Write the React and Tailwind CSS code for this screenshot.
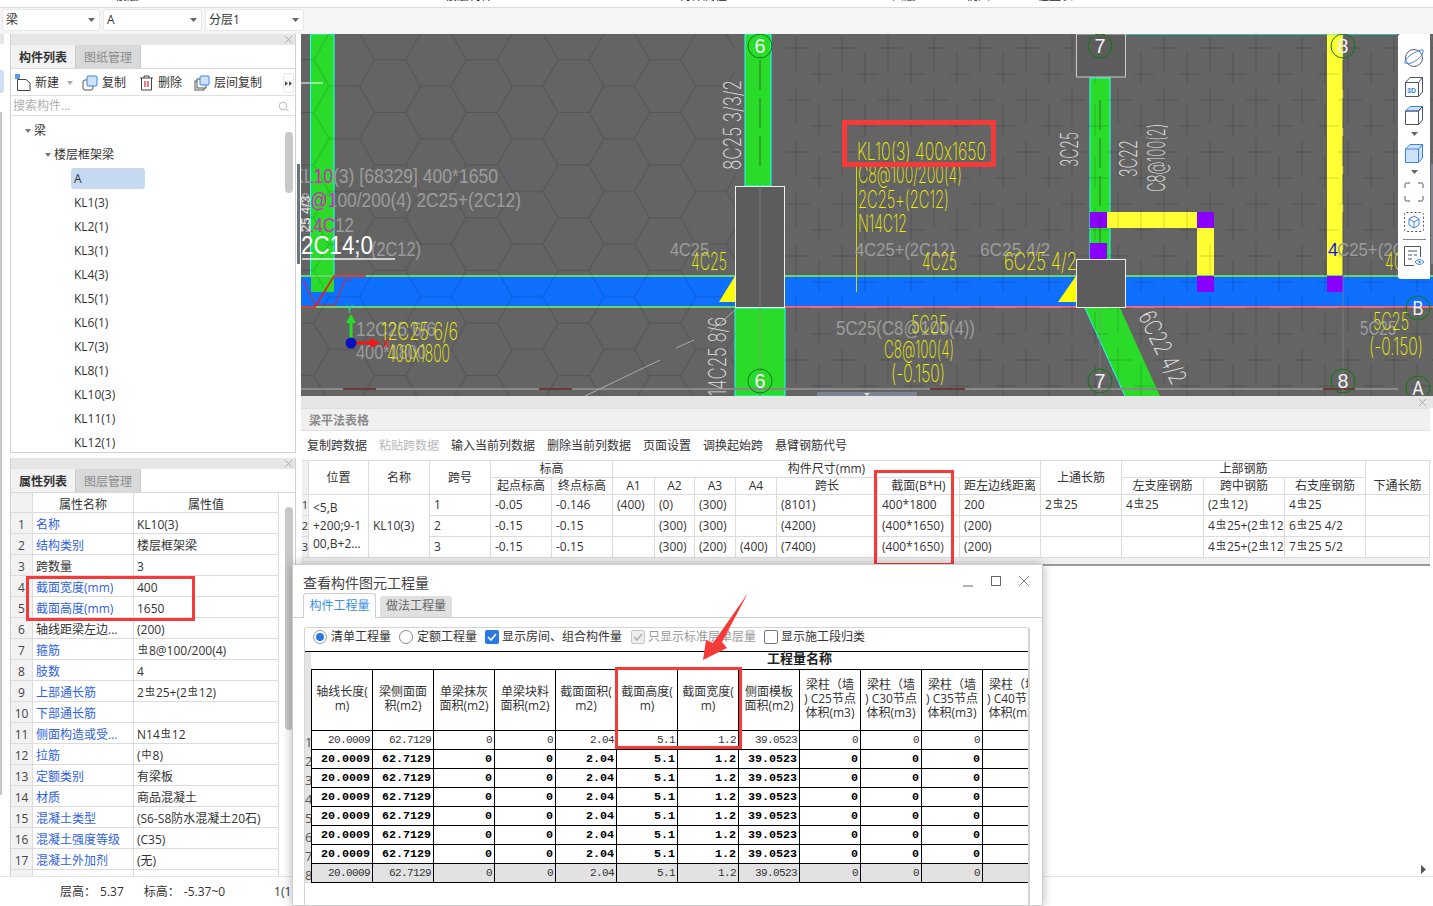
import React from 'react';

const FONT = "font-['Open_Sans','Noto_Sans_CJK_SC',sans-serif]";

// rebar grade glyphs sit a little above the baseline
const rebar = (text) =>
  text.split(/(虫|中)/).map((part, i) =>
    part === '虫' || part === '中' ? (
      <span key={i} className="relative -top-[2px] mx-[1px] text-[10px]">{part}</span>
    ) : (
      <span key={i}>{part}</span>
    )
  );

const CloseX = ({ className }) => (
  <svg width="9" height="9" viewBox="0 0 9 9" className={className}>
    <path d="M1 1L8 8M8 1L1 8" stroke="#aaa" strokeWidth="1" />
  </svg>
);

const Caret = () => (
  <svg width="7" height="4" viewBox="0 0 7 4" className="block"><path d="M0 0H7L3.5 4Z" fill="#666" /></svg>
);

const Select = ({ label, w }) => (
  <div className={`flex h-[22px] items-center justify-between rounded-[3px] border border-[#e8e8e8] bg-white pl-[3px] pr-[4px] text-[12px] text-[#333] ${w}`}>
    <span>{label}</span>
    <Caret />
  </div>
);

const PanelTabs = ({ active, other }) => (
  <div className="flex h-[24px] border-b border-[#d8d8d8] bg-white text-[12px] leading-[25px]">
    <div className="w-[65px] border-r border-[#ccc] bg-[#f2f2f2] text-center font-bold text-[#333]">{active}</div>
    <div className="w-[65px] border-r border-[#ccc] bg-[#d9d9d9] text-center text-[#8c8c8c]">{other}</div>
  </div>
);

const tree = ['KL1(3)', 'KL2(1)', 'KL3(1)', 'KL4(3)', 'KL5(1)', 'KL6(1)', 'KL7(3)', 'KL8(1)', 'KL10(3)', 'KL11(1)', 'KL12(1)'];

const ComponentPanel = () => (
  <div className="flex h-[419px] flex-col border border-[#d0d0d0] border-t-0">
    <div className="flex h-[11px] items-center justify-end bg-[#e6e6e6] pr-[2px]"><CloseX /></div>
    <PanelTabs active="构件列表" other="图纸管理" />
    <div className="flex h-[27px] items-center border-b border-[#e0e0e0] bg-white pl-[4px] pt-[2px] text-[12px] text-[#333]">
      <svg width="17" height="18" viewBox="0 0 17 18">
        <path d="M2.5 5.5H11L15 9V16.5H2.5Z" fill="none" stroke="#444" />
        <rect x="0" y="0" width="5" height="5" fill="#5b9bec" />
      </svg>
      <span className="ml-[3px]">新建</span>
      <span className="ml-[8px] mr-[9px]"><svg width="6" height="4" viewBox="0 0 6 4" className="block"><path d="M0 0H6L3 4Z" fill="#aaa" /></svg></span>
      <svg width="16" height="16" viewBox="0 0 16 16">
        <rect x="1" y="5" width="10" height="10" rx="2" fill="#fff" stroke="#555" />
        <rect x="5" y="1" width="10" height="10" rx="1" fill="#cfe2fb" stroke="#3b82e6" />
      </svg>
      <span className="ml-[4px]">复制</span>
      <svg width="15" height="16" viewBox="0 0 15 16" className="ml-[13px]">
        <path d="M1 3H14M5 3V1H10V3M2.5 3V15H12.5V3" fill="none" stroke="#444" />
        <path d="M6 6V12M9 6V12" stroke="#d22" strokeWidth="1.2" />
      </svg>
      <span className="ml-[4px]">删除</span>
      <svg width="16" height="16" viewBox="0 0 16 16" className="ml-[12px]">
        <rect x="1" y="6" width="9" height="9" fill="#fff" stroke="#555" />
        <rect x="3" y="4" width="9" height="9" fill="#fff" stroke="#555" />
        <rect x="6" y="1" width="9" height="9" rx="1" fill="#cfe2fb" stroke="#3b82e6" />
      </svg>
      <span className="ml-[4px]">层间复制</span>
      <div className="ml-[21px] flex h-[20px] w-[11px] items-center justify-center rounded-[3px] border border-[#e8e8e8]">
        <svg width="7" height="5" viewBox="0 0 7 5"><path d="M0 0L3 2.5L0 5ZM4 0L7 2.5L4 5Z" fill="#555" /></svg>
      </div>
    </div>
    <div className="flex h-[20px] items-center justify-between border-b border-[#e0e0e0] bg-white pl-[2px] pr-[6px] pt-[1px] text-[12px] text-[#b0b0b0]">
      <span>搜索构件...</span>
      <svg width="11" height="11" viewBox="0 0 11 11"><circle cx="5" cy="5" r="3.8" fill="none" stroke="#bbb" /><path d="M8 8L10.5 10.5" stroke="#bbb" /></svg>
    </div>
    <div className="relative min-h-0 flex-1 overflow-hidden bg-white pt-[2px] text-[12px] leading-[26px] text-[#333]">
      <div className="flex h-[24px] items-center pl-[14px] pt-[1px]">
        <svg width="6" height="4" viewBox="0 0 6 4" className="mr-[3px]"><path d="M0 0H6L3 4Z" fill="#777" /></svg>梁
      </div>
      <div className="flex h-[24px] items-center pl-[34px] pt-[1px]">
        <svg width="6" height="4" viewBox="0 0 6 4" className="mr-[3px]"><path d="M0 0H6L3 4Z" fill="#777" /></svg>楼层框架梁
      </div>
      <div className="flex h-[24px] items-center pl-[60px]">
        <div className="h-[21px] w-[74px] rounded-[3px] bg-[#c5d9f1] pl-[3px] leading-[21px]">A</div>
      </div>
      {tree.map((name) => (
        <div key={name} className="h-[24px] pl-[63px]">{name}</div>
      ))}
      <div className="absolute right-[2px] top-[16px] h-[61px] w-[8px] rounded-[4px] bg-[#c8c8c8]" />
    </div>
  </div>
);

const props = [
  ['名称', 'KL10(3)', 1], ['结构类别', '楼层框架梁', 1], ['跨数量', '3', 0], ['截面宽度(mm)', '400', 1],
  ['截面高度(mm)', '1650', 1], ['轴线距梁左边...', '(200)', 0], ['箍筋', '虫8@100/200(4)', 1], ['肢数', '4', 1],
  ['上部通长筋', '2虫25+(2虫12)', 1], ['下部通长筋', '', 1], ['侧面构造或受...', 'N14虫12', 1], ['拉筋', '(中8)', 1],
  ['定额类别', '有梁板', 1], ['材质', '商品混凝土', 1], ['混凝土类型', '(S6-S8防水混凝土20石)', 1],
  ['混凝土强度等级', '(C35)', 1], ['混凝土外加剂', '(无)', 1], ['', '', 0],
];

const PropertyPanel = () => (
  <div className="relative flex h-[418px] flex-col border-x border-[#d0d0d0]">
    <div className="flex h-[11px] items-center justify-end bg-[#e6e6e6] pr-[2px]"><CloseX /></div>
    <PanelTabs active="属性列表" other="图层管理" />
    <div className="min-h-0 flex-1 overflow-hidden bg-white text-[12px] text-[#333]">
      <div className="flex h-[20px] w-[268px] border-b border-r border-[#dcdcdc] leading-[23px]">
        <div className="w-[22px] border-r border-[#dcdcdc] bg-[#f2f2f2]" />
        <div className="w-[101px] border-r border-[#dcdcdc] text-center">属性名称</div>
        <div className="flex-1 text-center">属性值</div>
      </div>
      {props.map(([name, value, link], i) => (
        <div key={i} className="flex h-[21px] w-[268px] border-b border-r border-[#dcdcdc] leading-[23px]">
          <div className="w-[22px] border-r border-[#dcdcdc] bg-[#f2f2f2] text-center text-[#444]">{i < 17 ? i + 1 : ''}</div>
          <div className={`w-[101px] truncate border-r border-[#dcdcdc] pl-[3px] ${link ? 'text-[#2f62e0]' : 'text-[#333]'}`}>{name}</div>
          <div className="flex-1 truncate pl-[3px]">{rebar(value)}</div>
        </div>
      ))}
    </div>
    <div className="absolute right-[2px] top-[49px] h-[223px] w-[8px] rounded-[4px] bg-[#c8c8c8]" />
  </div>
);

const yellowTexts = [
  ['KL10(3)  400x1650', 857, 160, 129], ['C8@100/200(4)', 858, 183, 104], ['2C25+(2C12)', 858, 208, 91], ['N14C12', 858, 232, 49],
  ['4C25', 691, 270, 36], ['4C25', 922, 270, 35], ['6C25  4/2', 1004, 270, 73], ['12C25  6/6', 381, 340, 77], ['400x1800', 387, 362, 63],
  ['5C25', 911, 333, 36], ['C8@100(4)', 884, 358, 70], ['(-0.150)', 891, 382, 54], ['5C25', 1373, 330, 36], ['(-0.150)', 1369, 355, 54], ['4C25', 1385, 270, 36],
];

const grayTexts = [
  ['(2C12)', 371, 256, 50, 20],
  ['4C25', 670, 256, 39, 18], ['4C25+(2C12)', 855, 256, 100, 18], ['6C25 4/2', 980, 256, 70, 18], ['C25+(2C12)', 1337, 256, 92, 18],
  ['5C25(C8@100(4))', 836, 335, 139, 20], ['5C25', 1360, 335, 36, 20], ['12C25 6/6', 356, 336, 80, 20], ['400*1800', 356, 359, 70, 20],
];

// these lines cross the first green beam, where they read magenta
const crossingTexts = [
  ['KL10(3) [68329] 400*1650', 292, 183, 206], ['C8@100/200(4) 2C25+(2C12)', 288, 207, 233], ['N14C12', 292, 232, 62],
];

const sideTexts = [
  ['8C25  3/3/2', 741, 170, 90, '#e0e0e0'], ['14C25  8/6', 726, 396, 79, '#e0e0e0'], ['3C25', 1078, 167, 35, '#e6e6e6'],
  ['3C22', 1137, 177, 37, '#e6e6e6'], ['C8@100(2)', 1165, 192, 68, '#e6e6e6'],
];

const axisMarks = [['6', 760, 46], ['7', 1100, 46], ['8', 1343, 46], ['6', 760, 381], ['7', 1100, 381], ['8', 1343, 381], ['B', 1418, 308], ['A', 1418, 388]];

const CadCanvas = () => (
  <svg width="1132" height="362" viewBox="301 34 1132 362" className="block font-['Liberation_Sans',sans-serif]">
    <defs>
      <pattern id="hex" width="91.7" height="52.65" patternUnits="userSpaceOnUse" patternTransform="translate(405.5 296.7)">
        <path d="M0 26.3L15.2 0H45.6L60.8 26.3L45.6 52.65H15.2ZM60.8 26.3H91.7" fill="none" stroke="#000" strokeOpacity="0.16" />
      </pattern>
      <pattern id="rebars" width="46" height="52" patternUnits="userSpaceOnUse" patternTransform="translate(786 34)">
        <path d="M10 2V38M33 18V50M0 14H24M26 40H46" fill="none" stroke="#000" strokeOpacity="0.16" />
      </pattern>
      <clipPath id="beam"><rect x="311" y="34" width="23" height="258" /></clipPath>
      <clipPath id="offBeam"><path d="M301 34H311V296H301ZM334 34H735V296H334Z" /></clipPath>
    </defs>
    <rect x="301" y="34" width="1132" height="362" fill="#646464" />

    {/* beams */}
    <rect x="310.5" y="34" width="23.5" height="258" fill="#2adb2a" stroke="#2ff" />
    <rect x="745" y="34" width="26" height="152" fill="#2adb2a" stroke="#2ff" />
    <rect x="735" y="308" width="50" height="88" fill="#2adb2a" stroke="#2ff" />
    <rect x="1090" y="78" width="20" height="182" fill="#2adb2a" stroke="#2ff" />
    <rect x="1327" y="34" width="16" height="242" fill="#ffff33" />
    <path d="M1085 308H1120L1160 396H1125Z" fill="#2adb2a" />
    <path d="M1085 308L1125 396" stroke="#2ff" />
    <rect x="1107" y="212" width="90" height="16" fill="#ffff33" />
    <rect x="1197" y="228" width="17" height="48" fill="#ffff33" />
    <rect x="301" y="276" width="1132" height="31" fill="#0f6fff" />
    <rect x="311" y="276" width="23" height="16" fill="#2adb2a" />
    <path d="M301 276H1433" stroke="#6ad66a" strokeWidth="2" />
    <path d="M301 307H735" stroke="#6ad66a" strokeWidth="2" />
    <path d="M735 307H1433" stroke="#f56a7a" strokeWidth="2" />
    <path d="M1125 34H1397" stroke="#2ff" strokeWidth="1" />

    {/* patterns */}
    <rect x="301" y="34" width="434" height="362" fill="url(#hex)" />
    <rect x="785" y="34" width="648" height="362" fill="url(#rebars)" />

    {/* purple and triangles */}
    <rect x="1090" y="212" width="17" height="16" fill="#8a00ff" />
    <rect x="1090" y="243" width="17" height="17" fill="#8a00ff" />
    <rect x="1197" y="212" width="17" height="16" fill="#8a00ff" />
    <rect x="1197" y="276" width="17" height="16" fill="#8a00ff" />
    <rect x="1327" y="276" width="16" height="16" fill="#8a00ff" />
    <path d="M719 302L735 276V302ZM1058 302L1076 276V302Z" fill="#ffff00" />

    {/* columns */}
    <rect x="735.5" y="186.5" width="49" height="121" fill="#5c5c5c" stroke="#eee" />
    <rect x="1076.5" y="34" width="49" height="43" fill="#5c5c5c" stroke="#ccc" />
    <rect x="1076.5" y="259.5" width="49" height="48" fill="#5c5c5c" stroke="#eee" />

    {/* dimension stripes */}
    <path d="M301 389H1398" stroke="#8a8a8a" strokeWidth="2" />
    <path d="M343 389H376M539 389H572M930 389H965M1323 389H1355" stroke="#6b3a34" strokeWidth="2" />
    <path d="M585 396L660 360M676 348L694 340M710 332L735 310" stroke="#aaa" />
    <path d="M760 186V396M1100 308V396M1343 34V396" stroke="#888" strokeOpacity="0.6" />
    <path d="M760 60V170M1100 100V250M1343 60V276" stroke="#333" strokeDasharray="30 8" strokeOpacity="0.6" />
    <path d="M856.5 166V292" stroke="#d6d600" />
    <path d="M301 83H323" stroke="#fff" />

    {/* red bent rebar */}
    <path d="M301 307H315L334 276H366" fill="none" stroke="#f01818" strokeWidth="1.6" />
    <path d="M303 280L315 305H335L345 280H351" fill="none" stroke="#e02020" />

    {grayTexts.map(([t, x, y, len, size], i) => (
      <text key={i} x={x} y={y} fontSize={size} fill="#9c9c9c" textLength={len} lengthAdjust="spacingAndGlyphs">{t}</text>
    ))}
    {crossingTexts.map(([t, x, y, len]) => (
      <g key={t}>
        <text x={x} y={y} fontSize="20" fill="#9c9c9c" textLength={len} lengthAdjust="spacingAndGlyphs" clipPath="url(#offBeam)">{t}</text>
        <text x={x} y={y} fontSize="20" fill="#d824c4" textLength={len} lengthAdjust="spacingAndGlyphs" clipPath="url(#beam)">{t}</text>
      </g>
    ))}
    <text transform="translate(310 232) rotate(-90)" fontSize="13" fill="#e8e8e8">25 4/3</text>
    <text x="301" y="254" fontSize="25" fill="#ffffff" textLength="72" lengthAdjust="spacingAndGlyphs">2C14;0</text>
    <path d="M302 259H395" stroke="#eee" strokeWidth="1.4" />
    <text x="1328" y="256" fontSize="18" fill="#1414e0">4</text>

    {/* CAD labels are a thin single-stroke font in the source */}
    <g className="font-['Inter','Liberation_Sans',sans-serif] [font-feature-settings:'calt'_0]" fontWeight="200">
      {yellowTexts.map(([t, x, y, len]) => (
        <text key={`${t}${x}`} x={x} y={y} fontSize="24" fill="#f0f000" textLength={len} lengthAdjust="spacingAndGlyphs">{t}</text>
      ))}
      {sideTexts.map(([t, x, y, len, color]) => (
        <text key={t} transform={`translate(${x} ${y}) rotate(-90)`} fontSize="24" fill={color} textLength={len} lengthAdjust="spacingAndGlyphs">{t}</text>
      ))}
      <text transform="translate(1138 316) rotate(64)" fontSize="24" fill="#e6e6e6" textLength="78" lengthAdjust="spacingAndGlyphs">6C22  4/2</text>
    </g>

    {/* axis bubbles */}
    {axisMarks.map(([t, x, y], i) => (
      <g key={i}>
        <circle cx={x} cy={y} r="12" fill="none" stroke="#0a7a0a" />
        <text x={x} y={y + 7} fontSize="20" fill="#f4f4f4" textAnchor="middle" textLength="11" lengthAdjust="spacingAndGlyphs">{t}</text>
      </g>
    ))}

    {/* coordinate gizmo */}
    <path d="M351 340V316" stroke="#22dd22" strokeWidth="3" />
    <path d="M351 314L346 323H356Z" fill="#22dd22" />
    <path d="M355 343H372" stroke="#f01818" strokeWidth="3" />
    <path d="M381 343L370 338V348Z" fill="#f01818" />
    <circle cx="351" cy="343" r="5.5" fill="#0a10c0" />
    <text x="346" y="313" fontSize="11" fill="#22dd88">Y</text>
    <text x="382" y="348" fontSize="12" fill="#f01818">X</text>

    {/* bottom scroll thumb */}
    <rect x="817" y="392" width="100" height="4" fill="#7b8494" />
    <path d="M864 393H870L867 396Z" fill="#ddd" />
    <rect x="1431" y="164" width="2" height="100" fill="#7a8290" />
  </svg>
);

const ViewTools = () => (
  <div className="absolute right-[3px] top-0 flex h-[245px] w-[32px] flex-col items-center rounded-l-[3px] bg-white pt-[12px]">
    <svg width="22" height="24" viewBox="0 0 22 24" fill="none" className="block shrink-0">
      <circle cx="11" cy="12" r="8.5" stroke="#555f73" />
      <path d="M2 17C0 14 12 4 20 4C22 8 10 20 2 17Z" stroke="#3b82e6" />
    </svg>
    <svg width="20" height="22" viewBox="0 0 20 22" fill="none" className="mt-[6px] block shrink-0">
      <path d="M1.5 6.5H14.5V20.5H1.5ZM1.5 6.5L6 1.5H18.5V16L14.5 20.5M14.5 6.5L18.5 1.5" stroke="#4a5568" />
      <text x="3" y="17" fontSize="7" fontWeight="700" fill="#3b82e6" className="font-['Liberation_Sans']">3D</text>
    </svg>
    <svg width="20" height="21" viewBox="0 0 20 21" fill="none" className="mt-[7px] block shrink-0">
      <path d="M1.5 6L6 1.5H18.5L14.5 6Z" fill="#cfe2fb" stroke="#3b82e6" />
      <path d="M1.5 6H14.5V19.5H1.5ZM14.5 6L18.5 1.5V15L14.5 19.5" stroke="#4a5568" />
    </svg>
    <div className="mt-[6px]"><Caret /></div>
    <svg width="20" height="21" viewBox="0 0 20 21" className="mt-[7px] block shrink-0">
      <path d="M1.5 6L6 1.5H18.5V15L14.5 19.5H1.5Z" fill="#cfe2fb" stroke="#3b82e6" />
      <path d="M1.5 6H14.5V19.5M14.5 6L18.5 1.5" fill="none" stroke="#3b82e6" />
    </svg>
    <div className="mt-[6px]"><Caret /></div>
    <svg width="20" height="20" viewBox="0 0 20 20" fill="none" className="mt-[8px] block shrink-0">
      <path d="M1 6V2.5Q1 1 2.5 1H6M14 1H17.5Q19 1 19 2.5V6M19 14V17.5Q19 19 17.5 19H14M6 19H2.5Q1 19 1 17.5V14" stroke="#4a5568" />
    </svg>
    <svg width="20" height="20" viewBox="0 0 20 20" fill="none" className="mt-[10px] block shrink-0">
      <rect x="0.5" y="0.5" width="19" height="19" rx="2" stroke="#4a5568" strokeDasharray="2 2" />
      <path d="M10 4L15 7V13L10 16L5 13V7ZM5 7L10 10L15 7M10 10V16" stroke="#3b82e6" />
    </svg>
    <div className="mt-[7px] h-px w-[23px] shrink-0 bg-[#888]" />
    <svg width="22" height="22" viewBox="0 0 22 22" fill="none" className="mt-[5px] block shrink-0">
      <path d="M17.5 12V1.5H1.5V20.5H11" stroke="#4a5568" />
      <path d="M5 6H14M5 10H9M11 10H14M5 14H9" stroke="#4a5568" />
      <path d="M12 17Q16 12 21 17Q16 22 12 17Z" stroke="#3b82e6" />
      <circle cx="16.5" cy="17" r="1.2" fill="#3b82e6" />
    </svg>
  </div>
);

const planCols = 'grid-cols-[7px_60px_61px_61px_61px_61px_42px_40px_41px_41px_101px_82px_81px_81px_82px_81px_81px_64px]';
const C = 'flex items-center justify-center border-b border-r border-[#dcdcdc]';
const V = 'flex items-center overflow-hidden whitespace-nowrap border-b border-r border-[#dcdcdc] pl-[4px]';

const planRows = [
  ['1', '-0.05', '-0.146', '(400)', '(0)', '(300)', '', '(8101)', '400*1800', '200', '2虫25', '4虫25', '(2虫12)', '4虫25', ''],
  ['2', '-0.15', '-0.15', '', '(300)', '(300)', '', '(4200)', '(400*1650)', '(200)', '', '', '4虫25+(2虫12)', '6虫25 4/2', ''],
  ['3', '-0.15', '-0.15', '', '(300)', '(200)', '(400)', '(7400)', '(400*1650)', '(200)', '', '', '4虫25+(2虫12)', '7虫25 5/2', ''],
];

const PlanTable = () => (
  <div className="flex h-[158px] flex-col">
    <div className="h-[23px] border-y border-[#e0e0e0] bg-[#f0f0f0] pl-[8px] text-[12px] font-bold leading-[24px] text-[#8a8a8a]">梁平法表格</div>
    <div className="flex h-[29px] items-center gap-[12px] bg-white pl-[6px] pt-[1px] text-[12px] text-[#333]">
      <span>复制跨数据</span>
      <span className="text-[#b8b8b8]">粘贴跨数据</span>
      <span>输入当前列数据</span>
      <span>删除当前列数据</span>
      <span>页面设置</span>
      <span>调换起始跨</span>
      <span>悬臂钢筋代号</span>
    </div>
    <div className={`ml-[1px] grid grid-rows-[17px_17px_21px_21px_21px] border-t border-[#dcdcdc] bg-white text-[12px] text-[#333] ${planCols}`}>
      <div className={`row-span-2 bg-[#f0f0f0] ${C}`} />
      <div className={`row-span-2 ${C}`}>位置</div>
      <div className={`row-span-2 ${C}`}>名称</div>
      <div className={`row-span-2 ${C}`}>跨号</div>
      <div className={`col-span-2 ${C}`}>标高</div>
      <div className={`col-span-7 ${C}`}>构件尺寸(mm)</div>
      <div className={`row-span-2 ${C}`}>上通长筋</div>
      <div className={`col-span-3 ${C}`}>上部钢筋</div>
      <div className="border-r border-[#dcdcdc]" />
      {['起点标高', '终点标高', 'A1', 'A2', 'A3', 'A4', '跨长', '截面(B*H)', '距左边线距离', '左支座钢筋', '跨中钢筋', '右支座钢筋', '下通长筋'].map((h) => (
        <div key={h} className={`${C} overflow-hidden whitespace-nowrap`}>{h}</div>
      ))}
      {planRows.map((row, r) => (
        <React.Fragment key={r}>
          <div className={`bg-[#f0f0f0] text-[11px] ${C}`}>{r + 1}</div>
          {r === 0 && (
            <>
              <div className="row-span-3 flex flex-col justify-center border-b border-r border-[#dcdcdc] pl-[4px] leading-[18px]">
                <span>&lt;5,B</span><span>+200;9-1</span><span>00,B+2...</span>
              </div>
              <div className={`row-span-3 ${V}`}>KL10(3)</div>
            </>
          )}
          {row.map((v, i) => (
            <div key={i} className={V}>{rebar(v)}</div>
          ))}
        </React.Fragment>
      ))}
    </div>
    <div className="min-h-0 flex-1 border-b-2 border-[#9a9a9a] bg-[#f0f0f0]" />
  </div>
);

const heads = [
  ['轴线长度(', 'm)'], ['梁侧面面', '积(m2)'], ['单梁抹灰', '面积(m2)'], ['单梁块料', '面积(m2)'], ['截面面积(', 'm2)'], ['截面高度(', 'm)'],
  ['截面宽度(', 'm)'], ['侧面模板', '面积(m2)'], ['梁柱（墙', ') C25节点', '体积(m3)'], ['梁柱（墙', ') C30节点', '体积(m3)'], ['梁柱（墙', ') C35节点', '体积(m3)'], ['梁柱（墙', ') C40节点', '体积(m3)'],
];
const qty = ['20.0009', '62.7129', '0', '0', '2.04', '5.1', '1.2', '39.0523', '0', '0', '0', ''];

const QtyRow = ({ n }) => {
  const bold = n > 1 && n < 8;
  return (
    <div className="flex h-[19px]">
      <div className="w-[6px] shrink-0 overflow-hidden bg-[#e4e4e4] text-[13px] leading-[22px] text-[#555]">{n}</div>
      <div className={`flex border-b border-l border-black ${n === 8 ? 'bg-[#e2e2e2]' : 'bg-white'}`}>
        {qty.map((v, i) => (
          <div
            key={i}
            className={`h-[18px] w-[61px] shrink-0 border-r border-black pr-[2px] text-right font-['Liberation_Mono',monospace] leading-[18px] ${
              bold ? 'text-[11.7px] font-bold text-black' : 'text-[11px] tracking-[-0.6px] text-[#333]'
            }`}
          >
            {v}
          </div>
        ))}
      </div>
    </div>
  );
};

const QuantityDialog = () => (
  <div className="absolute left-[292px] top-[564px] h-[342px] w-[751px] overflow-hidden border border-[#cfcfcf] bg-white shadow-[0_0_10px_rgba(0,0,0,0.3)]">
    <div className="flex h-[28px] items-center pl-[10px] pt-[8px] text-[14px] leading-none text-[#444]">查看构件图元工程量</div>
    <svg width="72" height="14" viewBox="0 0 72 14" className="absolute left-[670px] top-[10px]" fill="none">
      <path d="M0 11H10" stroke="#666" />
      <rect x="28.5" y="1.5" width="9" height="9" stroke="#666" />
      <path d="M56 1L66 11M66 1L56 11" stroke="#888" />
    </svg>
    {/* tabs */}
    <div className="flex h-[25px] items-end gap-[4px] border-b border-[#cfcfcf] pl-[10px] text-[12px]">
      <div className="-mb-px h-[25px] w-[73px] rounded-t-[3px] border border-b-0 border-[#cfcfcf] bg-white text-center leading-[24px] text-[#3a8ee6]">构件工程量</div>
      <div className="h-[21px] w-[72px] rounded-t-[3px] bg-[#e0e0e0] text-center leading-[20px] text-[#666]">做法工程量</div>
    </div>
    <div className="ml-[11px] mr-[12px] mt-[9px] rounded-t-[3px] border-l border-t border-r-2 border-[#d5d5d5] pb-[40px]">
      <div className="flex h-[23px] items-center pb-[6px] pl-[8px] text-[12px] text-[#333]">
        <span className="flex h-[14px] w-[14px] items-center justify-center rounded-full border border-[#999]"><span className="h-[8px] w-[8px] rounded-full bg-[#2a78e4]" /></span>
        <span className="ml-[4px]">清单工程量</span>
        <span className="ml-[8px] h-[14px] w-[14px] rounded-full border border-[#888]" />
        <span className="ml-[4px]">定额工程量</span>
        <span className="ml-[8px] flex h-[14px] w-[14px] items-center justify-center rounded-[2px] bg-[#2a78e4]">
          <svg width="10" height="8" viewBox="0 0 10 8" fill="none"><path d="M1 4L4 7L9 1" stroke="#fff" strokeWidth="1.6" /></svg>
        </span>
        <span className="ml-[3px]">显示房间、组合构件量</span>
        <span className="ml-[9px] flex h-[14px] w-[14px] items-center justify-center rounded-[2px] border border-[#c8c8c8] bg-[#eee]">
          <svg width="10" height="8" viewBox="0 0 10 8" fill="none"><path d="M1 4L4 7L9 1" stroke="#aaa" strokeWidth="1.4" /></svg>
        </span>
        <span className="ml-[3px] text-[#999]">只显示标准层单层量</span>
        <span className="ml-[8px] h-[14px] w-[14px] rounded-[2px] border border-[#777]" />
        <span className="ml-[3px]">显示施工段归类</span>
      </div>
      {/* quantity grid, cut off on the right like the source */}
      <div className="overflow-hidden border-t border-black">
        <div className="flex h-[18px]">
          <div className="w-[6px] shrink-0 bg-[#e4e4e4]" />
          <div className="flex-1 border-b border-black pl-[456px] text-[13px] font-bold leading-[12px] text-[#222]">工程量名称</div>
        </div>
        <div className="flex h-[61px]">
          <div className="w-[6px] shrink-0 bg-[#e4e4e4]" />
          <div className="flex border-b border-l border-black">
            {heads.map((lines, i) => (
              <div key={i} className="flex w-[61px] shrink-0 flex-col items-center justify-center overflow-hidden whitespace-nowrap border-r border-black pb-[2px] text-[12px] leading-[14px] text-[#333]">
                {lines.map((l, j) => <span key={j}>{l}</span>)}
              </div>
            ))}
          </div>
        </div>
        {[1, 2, 3, 4, 5, 6, 7, 8].map((n) => <QtyRow key={n} n={n} />)}
      </div>
    </div>
  </div>
);

export default function App() {
  return (
    <div className={`relative h-[906px] w-[1433px] overflow-hidden bg-white ${FONT}`}>
      {/* clipped menu strip */}
      <div className="flex h-[8px] overflow-hidden border-b border-[#dcdcdc] text-[12px] leading-[12px] text-[#222]">
        <div className="-mt-[10px] ml-[115px]">楼层</div>
        <div className="-mt-[10px] ml-[306px]">楼层构件</div>
        <div className="-mt-[10px] ml-[186px]">构件属性</div>
        <div className="-mt-[10px] ml-[165px]">图层</div>
        <div className="-mt-[10px] ml-[50px]">视图</div>
        <div className="-mt-[10px] ml-[35px]">工程量表</div>
      </div>
      <div className="flex h-[26px] items-center gap-[3px] bg-[#f5f5f5] pb-[2px] pl-[2px]">
        <Select label="梁" w="w-[98px]" />
        <Select label="A" w="w-[99px]" />
        <Select label="分层1" w="w-[99px]" />
      </div>

      <div className="flex h-[842px]">
        {/* collapsed side rail */}
        <div className="w-[10px] shrink-0 bg-white">
          <div className="h-[10px] w-[4px] bg-[#e6e6e6]" />
          <div className="mt-[26px] h-[23px] w-[4px] rounded-r-[3px] bg-[#cfe0f5]" />
          <div className="mt-[19px] h-[683px] w-[2px] bg-[#c8c8c8]" />
        </div>
        <div className="flex w-[286px] shrink-0 flex-col gap-[5px]">
          <ComponentPanel />
          <PropertyPanel />
        </div>
        {/* splitter */}
        <div className="w-[5px] shrink-0 bg-white pl-[1px] pt-[130px]">
          <div className="h-[100px] w-[3px] bg-[#6a7482]" />
        </div>
        <div className="min-w-0 flex-1">
          <div className="relative h-[362px]">
            <CadCanvas />
            <ViewTools />
          </div>
          <div className="flex h-[12px] items-center justify-end bg-[#e6e6e6] pr-[6px]"><CloseX /></div>
          <div className="mr-[3px]"><PlanTable /></div>
        </div>
      </div>

      <div className="flex h-[30px] items-center border-t border-[#e4e4e4] bg-white pt-[1px] text-[12px] text-[#333]">
        <span className="ml-[60px]">层高：</span>
        <span className="ml-[4px]">5.37</span>
        <span className="ml-[20px]">标高：</span>
        <span className="ml-[4px]">-5.37~0</span>
        <span className="ml-[49px]">1(1</span>
      </div>

      {/* annotation boxes over the screenshot */}
      <div className="absolute left-[26px] top-[576px] h-[45px] w-[169px] border-[3px] border-[#f53a3a]" />
      <div className="absolute left-[842px] top-[120px] h-[47px] w-[154px] border-[5px] border-[#f53a3a]" />
      <div className="absolute left-[874px] top-[470px] h-[96px] w-[80px] border-[3px] border-[#f53a3a]" />

      <QuantityDialog />

      <div className="absolute left-[615px] top-[667px] h-[82px] w-[127px] border-[3px] border-[#f53a3a]" />
      <svg width="60" height="80" viewBox="0 0 60 80" className="absolute left-[695px] top-[588px]">
        <path d="M53 5L27 54L32 60L8 72L11 52L18 55Z" fill="#f53a3a" />
      </svg>
      <svg width="7" height="9" viewBox="0 0 7 9" className="absolute left-[1420px] top-[865px]"><path d="M1 0L6 4.5L1 9Z" fill="#555" /></svg>
    </div>
  );
}
